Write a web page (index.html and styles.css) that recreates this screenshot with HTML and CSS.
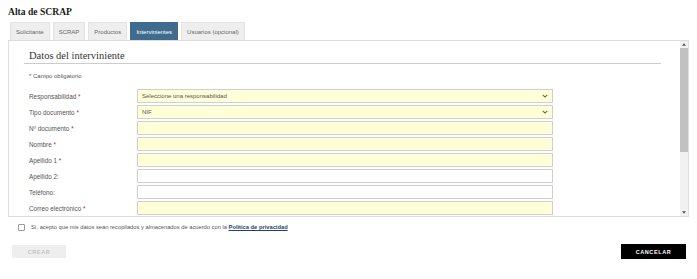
FILE: index.html
```html
<!DOCTYPE html>
<html lang="es">
<head>
<meta charset="utf-8">
<title>Alta de SCRAP</title>
<link rel="stylesheet" href="styles.css">
</head>
<body>
<div class="page">
  <h1 class="title">Alta de SCRAP</h1>
  <nav class="tabs">
    <span class="tab">Solicitante</span>
    <span class="tab">SCRAP</span>
    <span class="tab">Productos</span>
    <span class="tab active">Intervinientes</span>
    <span class="tab">Usuarios (opcional)</span>
  </nav>
  <div class="panel">
    <div class="panel-inner">
      <div class="section-head">
        <span class="section-title">Datos del interviniente</span>
      </div>
      <p class="required-note"><span class="req">*</span> Campo obligatorio</p>
      <div class="form">
        <label class="label">Responsabilidad <span class="req">*</span></label>
        <div class="field req-field select"><span>Seleccione una responsabilidad</span><svg class="chev" viewBox="0 0 8 5" width="6" height="4"><path d="M1 1 L4 4 L7 1" fill="none" stroke="#666" stroke-width="1.4"/></svg></div>
        <label class="label">Tipo documento <span class="req">*</span></label>
        <div class="field req-field select"><span>NIF</span><svg class="chev" viewBox="0 0 8 5" width="6" height="4"><path d="M1 1 L4 4 L7 1" fill="none" stroke="#666" stroke-width="1.4"/></svg></div>
        <label class="label">Nº documento <span class="req">*</span></label>
        <div class="field req-field"></div>
        <label class="label">Nombre <span class="req">*</span></label>
        <div class="field req-field"></div>
        <label class="label">Apellido 1 <span class="req">*</span></label>
        <div class="field req-field"></div>
        <label class="label">Apellido 2:</label>
        <div class="field"></div>
        <label class="label">Teléfono:</label>
        <div class="field"></div>
        <label class="label">Correo electrónico <span class="req">*</span></label>
        <div class="field req-field"></div>
      </div>
    </div>
    <div class="scrollbar">
      <span class="sb-arrow"><svg viewBox="0 0 6 4" width="4" height="3"><path d="M0 4 L3 0 L6 4 Z" fill="#555"/></svg></span>
      <span class="sb-thumb"></span>
      <span class="sb-track"></span>
      <span class="sb-arrow"><svg viewBox="0 0 6 4" width="4" height="3"><path d="M0 0 L3 4 L6 0 Z" fill="#555"/></svg></span>
    </div>
  </div>
  <div class="consent">
    <span class="checkbox"></span>
    <span class="consent-text">Sí, acepto que mis datos sean recopilados y almacenados de acuerdo con la <a class="link" href="#">Política de privacidad</a></span>
  </div>
  <div class="actions">
    <span class="btn btn-disabled">CREAR</span>
    <span class="btn btn-dark">CANCELAR</span>
  </div>
</div>
</body>
</html>
```
FILE: styles.css
```css
html, body {
  margin: 0;
  padding: 0;
  background: #fff;
}
.page {
  padding: 0 8px;
  font-family: "Liberation Sans", Arial, sans-serif;
  color: #555;
}
.title {
  margin: 0;
  padding-top: 5px;
  font-family: "Liberation Serif", "Times New Roman", serif;
  font-size: 9.6px;
  font-weight: bold;
  line-height: 13px;
  color: #1a1a1a;
}
.tabs {
  display: flex;
  gap: 3px;
  margin-top: 4px;
  padding-left: 2px;
}
.tab {
  display: flex;
  align-items: center;
  height: 18px;
  padding: 0 5px;
  background: #eeeeee;
  border: 1px solid #e2e2e2;
  border-bottom: none;
  box-sizing: border-box;
  font-size: 6px;
  color: #666;
}
.tab.active {
  background: #3f6b8e;
  border-color: #3f6b8e;
  color: #fff;
}
.panel {
  display: flex;
  height: 177px;
  box-sizing: border-box;
  border: 1px solid #dddddd;
  overflow: hidden;
}
.panel-inner {
  flex: 1;
  min-width: 0;
  padding: 9px 19px 0 15px;
}
.section-head {
  display: flex;
  padding: 0 0 2px 5px;
  border-bottom: 1px solid #cccccc;
}
.section-title {
  font-family: "Liberation Serif", "Times New Roman", serif;
  font-size: 10.5px;
  line-height: 11px;
  color: #333;
}
.required-note {
  margin: 8px 0 0 5px;
  font-size: 6px;
  line-height: 8px;
  color: #555;
}
.req {
  color: #cc2030;
}
.form {
  display: grid;
  grid-template-columns: 108px 416px;
  grid-auto-rows: 14px;
  row-gap: 2px;
  margin: 9px 0 0 5px;
  align-items: center;
}
.label {
  font-size: 6.4px;
  color: #555;
}
.field {
  height: 14px;
  box-sizing: border-box;
  border: 1px solid #cfcfcf;
  background: #fff;
  display: flex;
  align-items: center;
  padding: 0 4px;
  font-size: 6px;
  color: #555;
}
.req-field {
  background: #fefed8;
}
.select {
  justify-content: space-between;
}
.chev {
  display: block;
}
.scrollbar {
  width: 8px;
  display: flex;
  flex-direction: column;
  background: #f1f1f1;
}
.sb-arrow {
  height: 7px;
  display: flex;
  align-items: center;
  justify-content: center;
}
.sb-arrow svg {
  display: block;
}
.sb-thumb {
  height: 104px;
  background: #c1c1c1;
}
.sb-track {
  flex: 1;
}
.consent {
  display: flex;
  align-items: center;
  gap: 6px;
  margin-top: 5px;
  padding-left: 10px;
  height: 10px;
}
.checkbox {
  width: 7px;
  height: 7px;
  box-sizing: border-box;
  border: 1px solid #999;
  border-radius: 1px;
  background: #fff;
}
.consent-text {
  font-size: 5.75px;
  color: #555;
}
.link {
  color: #1f3f6e;
  font-weight: bold;
  text-decoration: underline;
}
.actions {
  display: flex;
  justify-content: space-between;
  align-items: center;
  margin-top: 12px;
  padding: 0 3px 0 4px;
}
.btn {
  display: flex;
  align-items: center;
  justify-content: center;
  font-size: 5.5px;
  font-weight: bold;
  letter-spacing: 0.6px;
}
.btn-disabled {
  width: 54px;
  height: 13px;
  background: #eeeeee;
  color: #c4c4c4;
}
.btn-dark {
  width: 65px;
  height: 15px;
  background: #000;
  color: #fff;
}
```
